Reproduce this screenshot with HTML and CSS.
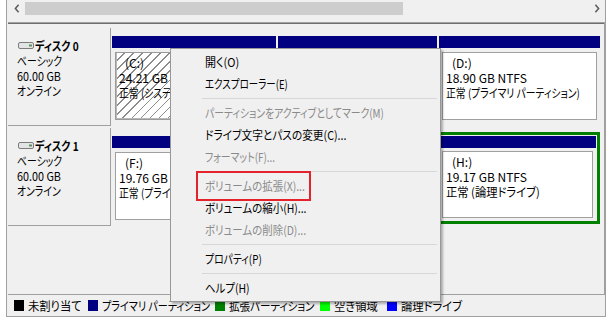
FILE: index.html
```html
<!DOCTYPE html>
<html lang="ja">
<head>
<meta charset="utf-8">
<title>ディスクの管理</title>
<link rel="stylesheet" href="styles.css">
</head>
<body>
<div class="frame">
  <div class="hscroll">
    <div class="sbtn"><svg width="6" height="9" viewBox="0 0 6 9"><path d="M4.6 0.8 L1.4 4.5 L4.6 8.2" fill="none" stroke="#606060" stroke-width="1.6"/></svg></div>
    <div class="track"><div class="thumb"></div></div>
    <div class="sbtn"><svg width="6" height="9" viewBox="0 0 6 9"><path d="M1.4 0.8 L4.6 4.5 L1.4 8.2" fill="none" stroke="#606060" stroke-width="1.6"/></svg></div>
  </div>
  <div class="view">
    <div class="disk">
      <div class="dlabel">
        <div class="dname"><svg class="dicon" width="16" height="7" viewBox="0 0 16 7"><rect x="0.5" y="0.5" width="15" height="6" rx="1.5" fill="#e4e4e4" stroke="#7c7c7c"/><rect x="11" y="2.5" width="3" height="2" fill="#5f8f5f"/></svg><span class="t sx84">ディスク 0</span></div>
        <div><span class="t sx82">ベーシック</span></div>
        <div><span class="t sx90">60.00 GB</span></div>
        <div><span class="t sx82">オンライン</span></div>
      </div>
      <div class="parts">
        <div class="part p-c">
          <div class="bar"></div>
          <div class="box hatch"><div class="vname">(C:)</div><div>24.21 GB NTFS</div><div><span class="t sx82">正常 (システム, ブート)</span></div></div>
        </div>
        <div class="part p-e">
          <div class="bar"></div>
          <div class="box"></div>
        </div>
        <div class="part p-d">
          <div class="bar"></div>
          <div class="box"><div class="vname">(D:)</div><div>18.90 GB NTFS</div><div><span class="t sx82">正常 (プライマリ パーティション)</span></div></div>
        </div>
      </div>
    </div>
    <div class="disk">
      <div class="dlabel">
        <div class="dname"><svg class="dicon" width="16" height="7" viewBox="0 0 16 7"><rect x="0.5" y="0.5" width="15" height="6" rx="1.5" fill="#e4e4e4" stroke="#7c7c7c"/><rect x="11" y="2.5" width="3" height="2" fill="#5f8f5f"/></svg><span class="t sx84">ディスク 1</span></div>
        <div><span class="t sx82">ベーシック</span></div>
        <div><span class="t sx90">60.00 GB</span></div>
        <div><span class="t sx82">オンライン</span></div>
      </div>
      <div class="parts">
        <div class="part p-f">
          <div class="bar"></div>
          <div class="box"><div class="vname">(F:)</div><div>19.76 GB NTFS</div><div><span class="t sx82">正常 (プライマリ パーティション)</span></div></div>
        </div>
        <div class="ext">
          <div class="part p-g">
            <div class="bar"></div>
            <div class="box"></div>
          </div>
          <div class="part p-h">
            <div class="bar"></div>
            <div class="box"><div class="vname">(H:)</div><div>19.17 GB NTFS</div><div><span class="t sx94">正常 (論理ドライブ)</span></div></div>
          </div>
        </div>
      </div>
    </div>
  </div>
  <div class="legend">
    <div class="lg lg1"><span class="sq sq-un"></span><span class="t sx94">未割り当て</span></div>
    <div class="lg lg2"><span class="sq sq-pri"></span><span class="t sx84">プライマリ パーティション</span></div>
    <div class="lg lg3"><span class="sq sq-ext"></span><span class="t sx88">拡張パーティション</span></div>
    <div class="lg lg4"><span class="sq sq-free"></span><span class="t sx94">空き領域</span></div>
    <div class="lg lg5"><span class="sq sq-log"></span><span class="t sx94">論理ドライブ</span></div>
  </div>

  <div class="menu">
    <div class="mi"><span class="t sx92">開く(O)</span></div>
    <div class="mi"><span class="t sx79">エクスプローラー(E)</span></div>
    <div class="sep"></div>
    <div class="mi dis"><span class="t sx82">パーティションをアクティブとしてマーク(M)</span></div>
    <div class="mi"><span class="t sx89">ドライブ文字とパスの変更(C)...</span></div>
    <div class="mi dis"><span class="t sx82">フォーマット(F)...</span></div>
    <div class="sep"></div>
    <div class="mi dis"><span class="t sx87">ボリュームの拡張(X)...</span></div>
    <div class="mi"><span class="t sx87">ボリュームの縮小(H)...</span></div>
    <div class="mi dis"><span class="t sx87">ボリュームの削除(D)...</span></div>
    <div class="sep"></div>
    <div class="mi"><span class="t sx82">プロパティ(P)</span></div>
    <div class="sep"></div>
    <div class="mi"><span class="t sx87">ヘルプ(H)</span></div>
  </div>
  <div class="mark"></div>
</div>
</body>
</html>
```

FILE: styles.css
```css
* { box-sizing: border-box; }
html, body { margin: 0; padding: 0; }
body {
  width: 611px;
  height: 319px;
  overflow: hidden;
  background: #ffffff;
  font-family: "Noto Sans CJK JP", "Noto Sans", sans-serif;
  font-size: 12px;
  color: #000;
  font-feature-settings: "palt";
}
.t {
  display: inline-block;
  transform-origin: 0 50%;
  white-space: nowrap;
}
.sx79 { transform: scaleX(0.79); }
.sx82 { transform: scaleX(0.82); }
.sx84 { transform: scaleX(0.84); }
.sx87 { transform: scaleX(0.87); }
.sx88 { transform: scaleX(0.88); }
.sx89 { transform: scaleX(0.89); }
.sx90 { transform: scaleX(0.90); }
.sx92 { transform: scaleX(0.92); }
.sx94 { transform: scaleX(0.94); }
.frame {
  position: relative;
  margin-left: 6px;
  width: 600px;
  height: 317px;
  border: 1px solid #a0a0a0;
  border-top: none;
  padding-left: 1px;
  background: #f0f0f0;
  display: flex;
  flex-direction: column;
}
.hscroll {
  height: 17px;
  display: flex;
  background: #f0f0f0;
  flex: none;
}
.sbtn {
  width: 17px;
  display: flex;
  align-items: center;
  justify-content: center;
}
.track { flex: 1; }
.thumb {
  width: 378px;
  height: 13px;
  margin-top: 2px;
  background: #cdcdcd;
}
.view {
  flex: none;
  height: 273px;
  margin-top: 5px;
  border-top: 1px solid #a0a0a0;
  border-bottom: 1px solid #a0a0a0;
  border-right: 1px solid #a0a0a0;
  box-shadow: inset 0 1px 0 #6e6e6e;
  padding-top: 5px;
}
.disk {
  display: flex;
  height: 98px;
  margin-bottom: 2px;
}
.dlabel {
  width: 103px;
  border-right: 1px solid #a0a0a0;
  border-bottom: 1px solid #a0a0a0;
  padding: 10px 0 0 9px;
  line-height: 15px;
  white-space: nowrap;
}
.dname {
  display: flex;
  align-items: center;
  font-weight: bold;
}
.dicon { margin: 0 1px 0 1px; flex: none; }
.parts {
  display: flex;
  align-items: flex-start;
  gap: 2px;
  margin-left: 1px;
  padding-top: 8px;
}
.part {
  display: flex;
  flex-direction: column;
  flex: none;
}
.bar {
  height: 12px;
  background: #000080;
}
.box {
  margin: 4px 3px 0;
  height: 68px;
  border: 1px solid #a0a0a0;
  background: #ffffff;
  padding: 2px 0 0 3px;
  line-height: 15px;
  overflow: hidden;
  white-space: nowrap;
}
.hatch {
  background: repeating-linear-gradient(135deg, #ffffff 0 5.4px, #8c8c8c 5.4px 6.4px);
  border-color: #9a9a9a;
  box-shadow: inset 1px -1px 0 #b8b8b8;
}
.vname { padding-left: 6px; }
.p-c { width: 164px; }
.p-e { width: 159px; }
.p-d { width: 161px; }
.p-f { width: 178px; }
.ext {
  display: flex;
  gap: 2px;
  width: 308px;
  margin-top: -4px;
  border: 3px solid #008000;
  padding: 1px 1px 3px;
}
.p-g { width: 141px; }
.p-h { width: 157px; }
.ext .box { height: 67px; margin-top: 3px; }
.legend {
  flex: none;
  height: 21px;
  display: flex;
  align-items: center;
  padding-left: 6px;
  white-space: nowrap;
}
.lg {
  display: flex;
  align-items: center;
  flex: none;
}
.lg1 { width: 74px; }
.lg2 { width: 127px; }
.lg3 { width: 105px; }
.lg4 { width: 67px; }
.lg5 { width: 90px; }
.sq {
  width: 10px;
  height: 11px;
  margin-right: 4px;
  flex: none;
}
.sq-un { background: #000000; }
.sq-pri { background: #000080; }
.sq-ext { background: #008000; }
.sq-free { background: #00ff00; }
.sq-log { background: #0000ff; }
.menu {
  position: absolute;
  left: 163px;
  top: 48px;
  width: 271px;
  background: #f0f0f0;
  border: 1px solid #979797;
  box-shadow: 2px 2px 2px rgba(0, 0, 0, 0.28);
  padding: 2px 2px 2px 0;
}
.mi {
  height: 22px;
  line-height: 22px;
  padding-left: 34px;
  white-space: nowrap;
}
.dis { color: #8a8a8a; }
.sep {
  height: 7px;
  margin-left: 31px;
  margin-right: 1px;
  background: linear-gradient(#d7d7d7, #d7d7d7) center / 100% 1px no-repeat;
}
.mark {
  position: absolute;
  left: 189px;
  top: 171px;
  width: 115px;
  height: 30px;
  border: 2px solid #e3222b;
}
```
